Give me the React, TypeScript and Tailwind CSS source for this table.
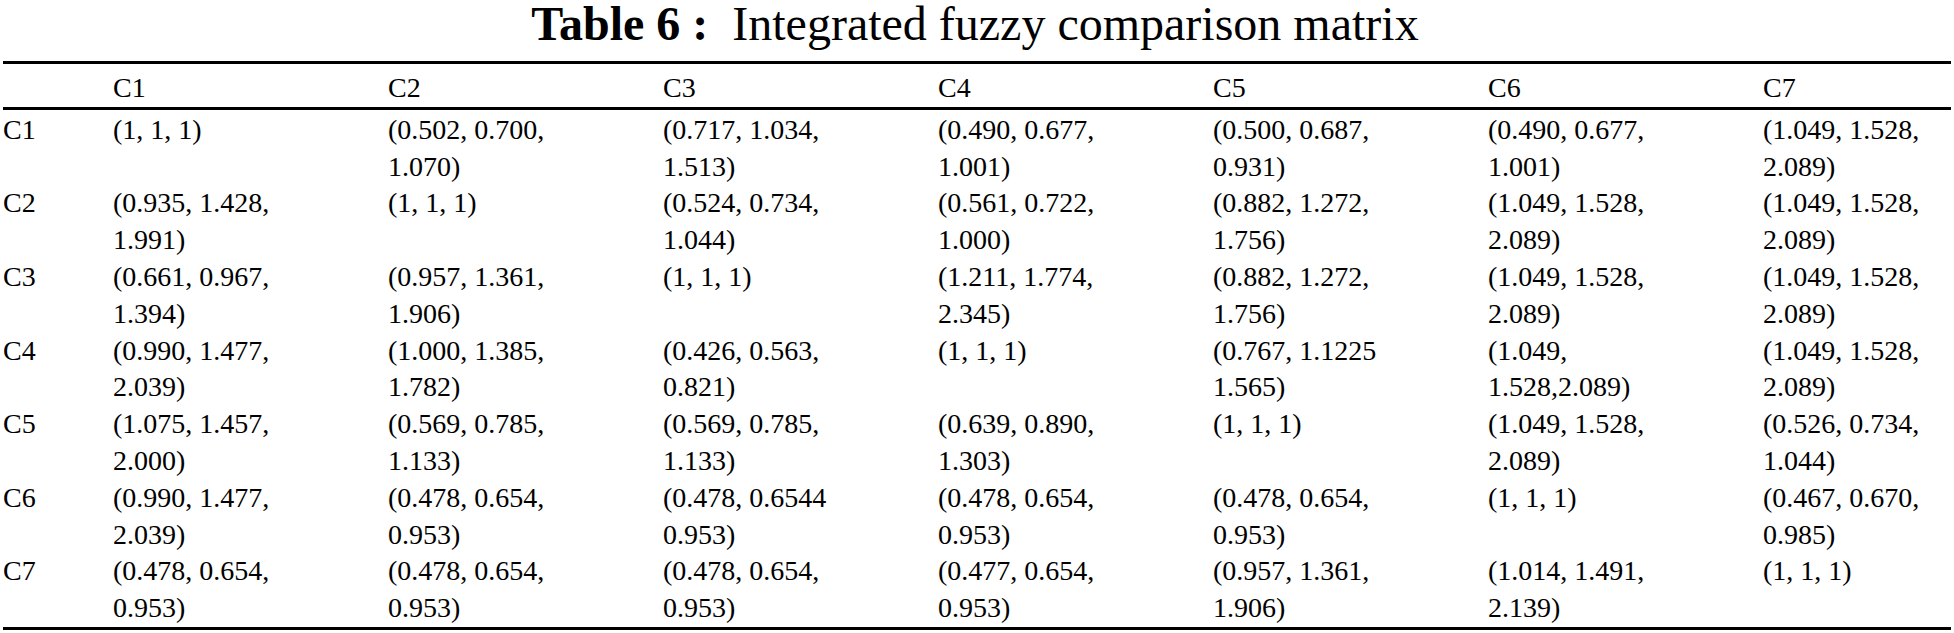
const cols = ['C1', 'C2', 'C3', 'C4', 'C5', 'C6', 'C7'];

const rows: { label: string; cells: string[] }[] = [
  {
    label: 'C1',
    cells: [
      '(1, 1, 1)',
      '(0.502, 0.700,\n1.070)',
      '(0.717, 1.034,\n1.513)',
      '(0.490, 0.677,\n1.001)',
      '(0.500, 0.687,\n0.931)',
      '(0.490, 0.677,\n1.001)',
      '(1.049, 1.528,\n2.089)',
    ],
  },
  {
    label: 'C2',
    cells: [
      '(0.935, 1.428,\n1.991)',
      '(1, 1, 1)',
      '(0.524, 0.734,\n1.044)',
      '(0.561, 0.722,\n1.000)',
      '(0.882, 1.272,\n1.756)',
      '(1.049, 1.528,\n2.089)',
      '(1.049, 1.528,\n2.089)',
    ],
  },
  {
    label: 'C3',
    cells: [
      '(0.661, 0.967,\n1.394)',
      '(0.957, 1.361,\n1.906)',
      '(1, 1, 1)',
      '(1.211, 1.774,\n2.345)',
      '(0.882, 1.272,\n1.756)',
      '(1.049, 1.528,\n2.089)',
      '(1.049, 1.528,\n2.089)',
    ],
  },
  {
    label: 'C4',
    cells: [
      '(0.990, 1.477,\n2.039)',
      '(1.000, 1.385,\n1.782)',
      '(0.426, 0.563,\n0.821)',
      '(1, 1, 1)',
      '(0.767, 1.1225\n1.565)',
      '(1.049,\n1.528,2.089)',
      '(1.049, 1.528,\n2.089)',
    ],
  },
  {
    label: 'C5',
    cells: [
      '(1.075, 1.457,\n2.000)',
      '(0.569, 0.785,\n1.133)',
      '(0.569, 0.785,\n1.133)',
      '(0.639, 0.890,\n1.303)',
      '(1, 1, 1)',
      '(1.049, 1.528,\n2.089)',
      '(0.526, 0.734,\n1.044)',
    ],
  },
  {
    label: 'C6',
    cells: [
      '(0.990, 1.477,\n2.039)',
      '(0.478, 0.654,\n0.953)',
      '(0.478, 0.6544\n0.953)',
      '(0.478, 0.654,\n0.953)',
      '(0.478, 0.654,\n0.953)',
      '(1, 1, 1)',
      '(0.467, 0.670,\n0.985)',
    ],
  },
  {
    label: 'C7',
    cells: [
      '(0.478, 0.654,\n0.953)',
      '(0.478, 0.654,\n0.953)',
      '(0.478, 0.654,\n0.953)',
      '(0.477, 0.654,\n0.953)',
      '(0.957, 1.361,\n1.906)',
      '(1.014, 1.491,\n2.139)',
      '(1, 1, 1)',
    ],
  },
];

const grid = 'grid grid-cols-[110px_repeat(6,275px)_1fr]';

export default function App() {
  return (
    <div className="w-full h-[633px] bg-white text-black font-['Liberation_Serif','Times_New_Roman',serif]">
      <h1 className="text-center text-[48px] leading-[48px] pr-[4px] whitespace-pre">
        <span className="font-bold">Table 6 :</span>
        <span>{'  '}Integrated fuzzy comparison matrix</span>
      </h1>

      <div className="mx-[3px] mt-[13px] text-[28px] leading-[36.8px]">
        <div className="h-[3px] bg-black" />

        <div className={`${grid} pt-[6px]`}>
          <div />
          {cols.map(c => (
            <div key={c}>{c}</div>
          ))}
        </div>

        <div className="h-[3px] bg-black" />

        <div className="pt-[2px]">
          {rows.map(r => (
            <div key={r.label} className={`${grid} h-[73.6px]`}>
              <div>{r.label}</div>
              {r.cells.map((cell, i) => (
                <div key={i} className="whitespace-pre-line">{cell}</div>
              ))}
            </div>
          ))}
        </div>

        <div className="h-[3px] bg-black" />
      </div>
    </div>
  );
}
